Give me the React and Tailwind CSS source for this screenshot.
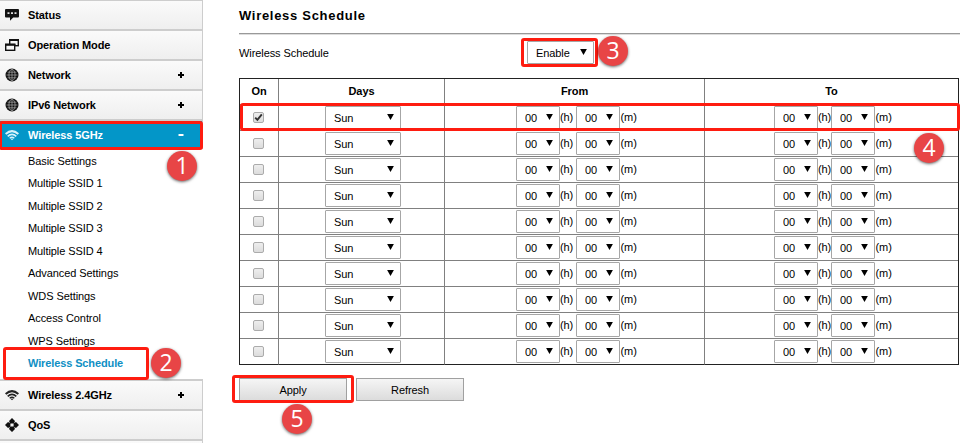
import React, { useState } from "react";

const DAYS = ["Sun", "Mon", "Tue", "Wed", "Thu", "Fri", "Sat"];
const HOURS = Array.from({ length: 24 }, (_, i) => String(i).padStart(2, "0"));
const MINUTES = Array.from({ length: 60 }, (_, i) => String(i).padStart(2, "0"));

const SUB_ITEMS = [
  "Basic Settings",
  "Multiple SSID 1",
  "Multiple SSID 2",
  "Multiple SSID 3",
  "Multiple SSID 4",
  "Advanced Settings",
  "WDS Settings",
  "Access Control",
  "WPS Settings",
  "Wireless Schedule",
];

function StatusIcon() {
  return (
    <svg width="14" height="14" viewBox="0 0 14 14">
      <path d="M1 1h12a1 1 0 0 1 1 1v6.5a1 1 0 0 1-1 1H8.2L5 12.8V9.5H1a1 1 0 0 1-1-1V2a1 1 0 0 1 1-1z" fill="#111" />
      <path d="M2.5 4.3h2v1.8h-2zM6 4.3h2v1.8H6zM9.5 4.3h2v1.8h-2z" fill="#ddd" />
    </svg>
  );
}

function ModeIcon() {
  return (
    <svg width="14" height="14" viewBox="0 0 14 14" fill="#f6f6f6" stroke="#111">
      <rect x="4.7" y="1.7" width="8.6" height="6" strokeWidth="1.4" />
      <path d="M4 2h10" strokeWidth="2" />
      <rect x="0.7" y="6.3" width="9" height="6" strokeWidth="1.4" />
      <path d="M0 6.8h10.4" strokeWidth="2" />
    </svg>
  );
}

function GlobeIcon() {
  return (
    <svg width="14" height="14" viewBox="0 0 14 14">
      <circle cx="7" cy="7" r="6.5" fill="#111" />
      <g fill="none" stroke="#aaa" strokeWidth="0.7">
        <path d="M7 1.5v11M1.5 7h11M2.6 4.2h8.8M2.6 9.8h8.8" />
        <ellipse cx="7" cy="7" rx="3.1" ry="5.6" />
      </g>
    </svg>
  );
}

function WifiIcon({ color = "#222" }) {
  return (
    <svg width="14" height="14" viewBox="0 0 14 14" fill="none" stroke={color} strokeWidth="2">
      <path d="M0.6 6Q7 0.2 13.4 6" />
      <path d="M2.7 8.3Q7 4.4 11.3 8.3" strokeWidth="1.7" />
      <path d="M4.7 10.2Q7 8.2 9.3 10.2" strokeWidth="1.5" />
      <path d="M5.7 10.9Q7 10 8.3 10.9L7 12.3z" fill={color} stroke="none" />
    </svg>
  );
}

function QosIcon() {
  return (
    <svg width="14" height="14" viewBox="0 0 14 14" fill="#111">
      <path d="M7 0l3 3-1.2 2.4H5.2L4 3zM7 14l3-3-1.2-2.4H5.2L4 11zM0 7l3-3 2.4 1.2v3.6L3 10zM14 7l-3-3-2.4 1.2v3.6L11 10z" />
    </svg>
  );
}

function MenuItem({ icon, label, sign, active, first }) {
  return (
    <div
      className={`flex shrink-0 items-center border-[#cdcdcd] pl-[5px] text-[11px] font-bold tracking-[-0.1px] ${
        first ? "h-[29px] border-t" : "h-[30px] border-t-2"
      } ${active ? "bg-[#0396c8] text-white" : "bg-linear-to-b from-[#fafafa] to-[#efefef]"}`}
    >
      <span className="w-[23px]">{icon}</span>
      <span className="flex-1">{label}</span>
      {sign && (
        <svg width="6" height="6" className="mr-[18px]" stroke="currentColor" strokeWidth="2">
          <path d={sign === "+" ? "M0 3h6M3 0v6" : "M0.5 3h5"} />
        </svg>
      )}
    </div>
  );
}

function Select({ className, options, defaultValue }) {
  return (
    <span className={`flex h-[23px] items-center rounded-[1px] border border-[#a6a6a6] bg-white ${className}`}>
      <select defaultValue={defaultValue} className="h-full min-w-0 flex-1 appearance-none pt-px outline-none">
        {options.map((o) => (
          <option key={o}>{o}</option>
        ))}
      </select>
      <svg width="7" height="6" className="mb-[2px] shrink-0">
        <path d="M0.1 0h6.8L3.5 6z" fill="#000" />
      </svg>
    </span>
  );
}

function Time({ gap }) {
  return (
    <div className="flex items-center">
      <Select className="w-[44px] pr-[6px] pl-[8px]" options={HOURS} defaultValue="00" />
      <span className={`pb-px ${gap}`}>(h)</span>
      <Select className="w-[44px] pr-[6px] pl-[8px]" options={MINUTES} defaultValue="00" />
      <span className="pb-px pl-[0.5px]">(m)</span>
    </div>
  );
}

function Check({ checked, onChange }) {
  return (
    <label className="relative mx-auto block size-[11px] rounded-[2px] border border-[#ababab] bg-linear-to-b from-[#eeeeee] to-[#dcdcdc]">
      <input type="checkbox" checked={checked} onChange={onChange} className="absolute inset-0 opacity-0" />
      {checked && (
        <svg width="9" height="9" viewBox="0 0 9 9" className="block" fill="none" stroke="#333" strokeWidth="1.9">
          <path d="M1.2 4.6l2.2 2.3L7.8 1.4" />
        </svg>
      )}
    </label>
  );
}

// numbered step marker
function Badge({ n, className }) {
  return (
    <div
      className={`absolute z-10 flex size-[30px] items-center justify-center rounded-full bg-[#e84546] pb-px font-['Open_Sans',sans-serif] text-[23px] leading-none tracking-normal text-white shadow-[0_1px_3px_rgba(0,0,0,0.6)] ${className}`}
    >
      {n}
    </div>
  );
}

function Outline({ className }) {
  return <div className={`pointer-events-none absolute z-10 rounded-[3px] border-3 border-[#fe1c10] ${className}`} />;
}

export default function App() {
  const [rows, setRows] = useState(Array.from({ length: 10 }, (_, i) => i === 0));

  const toggle = (index) => {
    setRows((prev) => prev.map((on, i) => (i === index ? !on : on)));
  };

  return (
    <div className="relative flex h-[443px] w-[973px] overflow-hidden bg-white font-['Liberation_Sans',Arial,sans-serif] text-[11px] leading-[14px] tracking-[-0.08px] text-black">
      <aside className="flex w-[203px] shrink-0 flex-col">
        <div className="shrink-0 border-r border-[#cdcdcd]">
          <MenuItem first icon={<StatusIcon />} label="Status" />
          <MenuItem icon={<ModeIcon />} label="Operation Mode" />
          <MenuItem icon={<GlobeIcon />} label="Network" sign="+" />
          <MenuItem icon={<GlobeIcon />} label="IPv6 Network" sign="+" />
          <MenuItem active icon={<WifiIcon color="#d8f2fb" />} label="Wireless 5GHz" sign="-" />
        </div>
        <ul className="h-[230px] shrink-0 pt-[0.5px] pl-[28px]">
          {SUB_ITEMS.map((item) => (
            <li
              key={item}
              className={`flex h-[22.5px] items-center ${
                item === "Wireless Schedule" ? "font-bold tracking-[-0.12px] text-[#0f8fc4]" : ""
              }`}
            >
              {item}
            </li>
          ))}
        </ul>
        <div className="shrink-0 border-r border-[#cdcdcd]">
          <MenuItem icon={<WifiIcon />} label="Wireless 2.4GHz" sign="+" />
          <MenuItem icon={<QosIcon />} label="QoS" />
          <MenuItem />
        </div>
      </aside>

      <main className="ml-[36px] w-[721px]">
        <h1 className="mt-[9px] text-[13px] font-bold tracking-[0.7px]">Wireless Schedule</h1>
        <hr className="mt-[10px] border-t-[1px] border-b border-t-[#999] border-b-[#ddd]" />
        <div className="mt-[6px] flex items-center">
          <span className="w-[288px]">Wireless Schedule</span>
          <Select className="w-[67px] pr-[6px] pl-[8px]" options={["Enable", "Disable"]} defaultValue="Enable" />
        </div>

        <table className="mt-[14px] w-[720px] table-fixed border-separate border-spacing-0 border border-b-0 border-[#222]">
          <colgroup>
            <col className="w-[39px]" />
            <col className="w-[166px]" />
            <col className="w-[260px]" />
            <col className="w-[253px]" />
          </colgroup>
          <thead>
            <tr className="h-[26px]">
              <th className="border-r border-b border-[#808080] p-0 pb-px">On</th>
              <th className="border-r border-b border-[#808080] p-0 pb-px">Days</th>
              <th className="border-r border-b border-[#808080] p-0 pb-px">From</th>
              <th className="border-b border-[#808080] p-0 pb-px">To</th>
            </tr>
          </thead>
          <tbody>
            {rows.map((on, i) => {
              const line = i === rows.length - 1 ? "border-b-[#222]" : "border-b-[#808080]";
              return (
                <tr key={i} className="h-[26px]">
                  <td className={`border-r border-b border-r-[#808080] p-0 pr-px ${line}`}>
                    <Check checked={on} onChange={() => toggle(i)} />
                  </td>
                  <td className={`border-r border-b border-r-[#808080] p-0 pl-[46px] ${line}`}>
                    <Select className="w-[76px] pr-[6px] pl-[8px]" options={DAYS} defaultValue="Sun" />
                  </td>
                  <td className={`border-r border-b border-r-[#808080] p-0 pl-[71px] ${line}`}>
                    <Time gap="w-[16px]" />
                  </td>
                  <td className={`border-b p-0 pl-[69px] ${line}`}>
                    <Time gap="w-[13px]" />
                  </td>
                </tr>
              );
            })}
          </tbody>
        </table>

        <div className="mt-[13px] flex gap-[9px]">
          <button className="h-[23px] w-[108px] border border-[#a0a0a0] bg-linear-to-b from-[#f5f5f5] to-[#dcdcdc]">
            Apply
          </button>
          <button className="h-[23px] w-[108px] border border-[#a0a0a0] bg-linear-to-b from-[#f5f5f5] to-[#dcdcdc]">
            Refresh
          </button>
        </div>
      </main>

      <Outline className="top-[121px] left-[-1px] h-[29px] w-[204px]" />
      <Outline className="top-[347px] left-[3px] h-[33px] w-[146px]" />
      <Outline className="top-[38px] left-[521px] h-[29px] w-[77px]" />
      <Outline className="top-[103px] left-[240px] h-[28px] w-[720px]" />
      <Outline className="top-[375px] left-[232px] h-[28px] w-[122px]" />

      <Badge n={1} className="top-[151px] left-[167px]" />
      <Badge n={2} className="top-[348px] left-[151px]" />
      <Badge n={3} className="top-[36px] left-[598px]" />
      <Badge n={4} className="top-[133px] left-[914px]" />
      <Badge n={5} className="top-[404px] left-[282px]" />
    </div>
  );
}
